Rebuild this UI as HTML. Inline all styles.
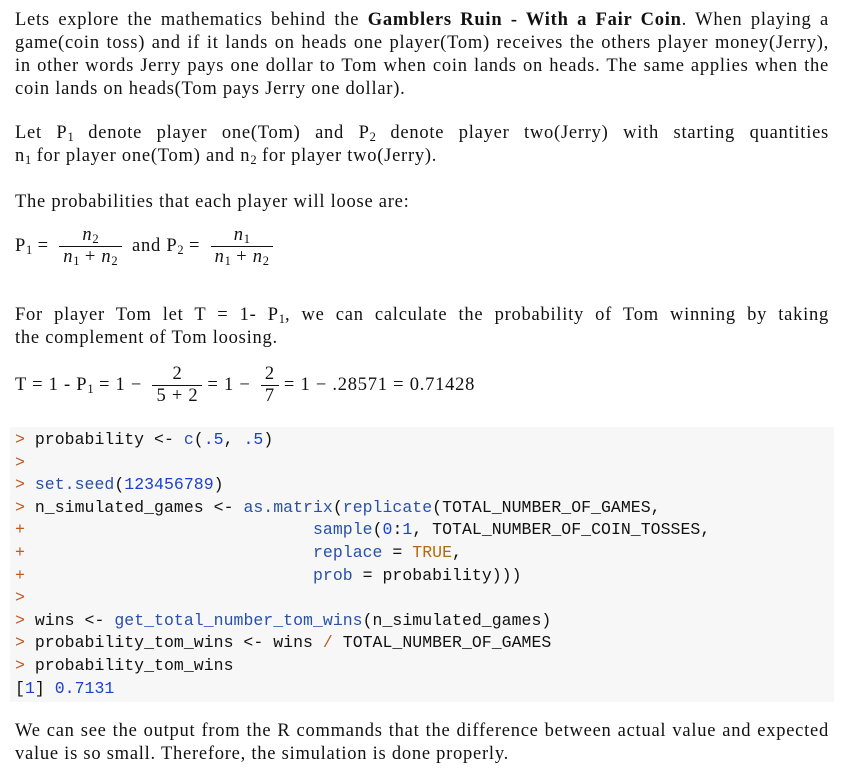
<!DOCTYPE html>
<html><head><meta charset="utf-8"><style>
body{margin:0;width:844px;height:780px;background:#fff;position:relative;overflow:hidden;font-family:"Liberation Serif",serif;font-size:18.5px;letter-spacing:0.75px;color:#111}
.l{position:absolute;left:15px;width:814px;height:23px;line-height:23px;text-align:justify;text-align-last:justify;white-space:nowrap}
.n{text-align-last:left}
sub{font-size:12.5px;vertical-align:-3px;line-height:0;letter-spacing:0}
.code{position:absolute;left:10px;top:427px;width:824px;height:275px;background:#f7f7f7}
.c{position:absolute;left:15px;font-family:"Liberation Mono",monospace;font-size:16.5px;letter-spacing:0.03px;line-height:22.6px;white-space:pre;color:#111}
.p{color:#c05a20}.f{color:#2850a8}.num{color:#1a3fd0}.t{color:#b06a10}
.frac{display:inline-block;vertical-align:middle;text-align:center;margin:0 5px}
.frac span{display:block;padding:0 4px;line-height:21px}
.frac .d{border-top:1px solid #111}
i{font-style:italic}
</style></head><body>
<div class="l" style="top:9px">Lets explore the mathematics behind the <b>Gamblers Ruin - With a Fair Coin</b>. When playing a</div>
<div class="l" style="top:32px">game(coin toss) and if it lands on heads one player(Tom) receives the others player money(Jerry),</div>
<div class="l" style="top:55px">in other words Jerry pays one dollar to Tom when coin lands on heads. The same applies when the</div>
<div class="l n" style="top:78px">coin lands on heads(Tom pays Jerry one dollar).</div>
<div class="l" style="top:122px">Let P<sub>1</sub> denote player one(Tom) and P<sub>2</sub> denote player two(Jerry) with starting quantities</div>
<div class="l n" style="top:145px">n<sub>1</sub> for player one(Tom) and n<sub>2</sub> for player two(Jerry).</div>
<div class="l n" style="top:191px">The probabilities that each player will loose are:</div>
<div style="position:absolute;left:15px;top:225px;line-height:23px;white-space:nowrap">P<sub>1</sub> = <span class="frac"><span><i>n</i><sub>2</sub></span><span class="d"><i>n</i><sub>1</sub> + <i>n</i><sub>2</sub></span></span> and P<sub>2</sub> = <span class="frac"><span><i>n</i><sub>1</sub></span><span class="d"><i>n</i><sub>1</sub> + <i>n</i><sub>2</sub></span></span></div>
<div class="l" style="top:304px">For player Tom let T = 1- P<sub>1</sub>, we can calculate the probability of Tom winning by taking</div>
<div class="l n" style="top:327px">the complement of Tom loosing.</div>
<div style="position:absolute;left:15px;top:364px;line-height:23px;white-space:nowrap">T = 1 - P<sub>1</sub> = 1 − <span class="frac"><span>2</span><span class="d">5 + 2</span></span>= 1 − <span class="frac"><span>2</span><span class="d">7</span></span>= 1 − .28571 = 0.71428</div>
<div class="code"></div>
<div class="c" style="top:429px"><span class="p">&gt;</span> probability &lt;- <span class="f">c</span>(<span class="num">.5</span>, <span class="num">.5</span>)
<span class="p">&gt;</span>
<span class="p">&gt;</span> <span class="f">set.seed</span>(<span class="num">123456789</span>)
<span class="p">&gt;</span> n_simulated_games &lt;- <span class="f">as.matrix</span>(<span class="f">replicate</span>(TOTAL_NUMBER_OF_GAMES,
<span class="p">+</span>                             <span class="f">sample</span>(<span class="num">0</span>:<span class="num">1</span>, TOTAL_NUMBER_OF_COIN_TOSSES,
<span class="p">+</span>                             <span class="f">replace</span> = <span class="t">TRUE</span>,
<span class="p">+</span>                             <span class="f">prob</span> = probability)))
<span class="p">&gt;</span>
<span class="p">&gt;</span> wins &lt;- <span class="f">get_total_number_tom_wins</span>(n_simulated_games)
<span class="p">&gt;</span> probability_tom_wins &lt;- wins <span class="p">/</span> TOTAL_NUMBER_OF_GAMES
<span class="p">&gt;</span> probability_tom_wins
[<span class="num">1</span>] <span class="num">0.7131</span></div>
<div class="l" style="top:720px">We can see the output from the R commands that the difference between actual value and expected</div>
<div class="l n" style="top:743px">value is so small. Therefore, the simulation is done properly.</div>
</body></html>
